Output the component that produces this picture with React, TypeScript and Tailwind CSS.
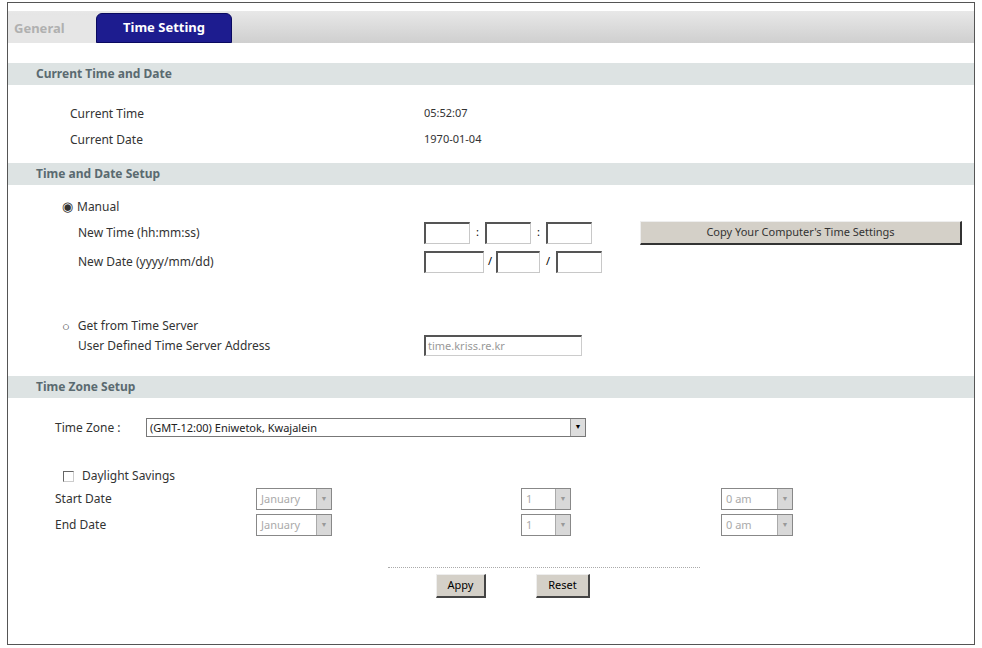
import React from "react";

const Hdr = ({ t }: { t: string }) => (
  <div className="h-[22px] bg-[#dde3e3] pl-[28px] flex items-center text-[12px] font-bold text-[#5a6a70] font-['DejaVu_Sans',sans-serif]">{t}</div>
);
const Box = ({ w }: { w: string }) => (
  <div className={`${w} h-[22px] bg-white border border-[#c8c8c8] border-t-[#555] border-l-[#555] border-t-2 border-l-2`} />
);
const Sel = ({ w, t }: { w: string; t: string }) => (
  <div className={`${w} h-[22px] flex border border-[#888] bg-white`}>
    <div className="flex-1 text-[11px] text-[#aaa] pl-1 leading-[20px] font-['Liberation_Sans',sans-serif]">{t}</div>
    <div className="w-[15px] bg-[#d8d8d8] border-l border-[#aaa] flex items-center justify-center text-[7px] text-[#999]">▼</div>
  </div>
);
const Lbl = "text-[12px] text-[#333] font-['DejaVu_Sans',sans-serif]";

export default function App() {
  return (
    <div className="w-[982px] h-[648px] bg-white p-[2px_7px_3px_7px]">
      <div className="h-full border border-[#555] flex flex-col">
        <div className="mt-[8px] h-[32px] bg-gradient-to-b from-[#e8e8e8] to-[#cfcfcf] flex items-end">
          <div className="w-[88px] h-[28px] flex items-center pl-[6px] text-[13px] font-bold text-[#b0b0b0] font-['DejaVu_Serif',serif] bg-[#e6e6e6]">General</div>
          <div className="w-[136px] h-[30px] rounded-t-[6px] bg-[#1d1c8f] border border-[#0a0a60] flex items-center justify-center text-[13px] font-bold text-white font-['DejaVu_Sans',sans-serif]">Time Setting</div>
        </div>
        <div className="h-[20px]" />
        <Hdr t="Current Time and Date" />
        <div className="flex flex-col gap-[8px] pt-[20px] pb-[14px]">
          <div className="flex"><div className={`w-[416px] pl-[62px] ${Lbl}`}>Current Time</div><div className="text-[11px] text-[#333] font-['Liberation_Sans',sans-serif]">05:52:07</div></div>
          <div className="flex"><div className={`w-[416px] pl-[62px] ${Lbl}`}>Current Date</div><div className="text-[11px] text-[#333] font-['Liberation_Sans',sans-serif]">1970-01-04</div></div>
        </div>
        <Hdr t="Time and Date Setup" />
        <div className="pt-[12px] pl-[54px] flex flex-col">
          <div className={`flex items-center gap-[4px] ${Lbl}`}><span className="text-[13px]">◉</span>Manual</div>
          <div className="flex items-center mt-[4px]">
            <div className={`w-[362px] pl-[16px] ${Lbl}`}>New Time (hh:mm:ss)</div>
            <Box w="w-[46px]" /><span className="w-[15px] text-center text-[11px]">:</span><Box w="w-[46px]" /><span className="w-[15px] text-center text-[11px]">:</span><Box w="w-[46px]" />
            <div className="ml-[48px] w-[322px] h-[24px] bg-[#d4d0c8] border border-[#eee] border-r-[#333] border-b-[#333] border-r-2 border-b-2 flex items-center justify-center text-[11px] text-[#333] font-['Liberation_Sans',sans-serif]">Copy Your Computer's Time Settings</div>
          </div>
          <div className="flex items-center mt-[6px]">
            <div className={`w-[362px] pl-[16px] ${Lbl}`}>New Date (yyyy/mm/dd)</div>
            <Box w="w-[60px]" /><span className="w-[12px] text-center text-[11px]">/</span><Box w="w-[44px]" /><span className="w-[16px] text-center text-[11px]">/</span><Box w="w-[46px]" />
          </div>
          <div className={`flex items-center gap-[8px] mt-[44px] ${Lbl}`}><span className="text-[13px]">○</span>Get from Time Server</div>
          <div className="flex items-center -mt-[1px]">
            <div className={`w-[362px] pl-[16px] ${Lbl}`}>User Defined Time Server Address</div>
            <div className="w-[158px] h-[21px] border border-[#ccc] border-l-2 border-t-2 border-l-[#555] border-t-[#555] text-[11px] text-[#999] pl-[2px] leading-[17px] font-['Liberation_Sans',sans-serif]">time.kriss.re.kr</div>
          </div>
        </div>
        <div className="h-[20px]" />
        <Hdr t="Time Zone Setup" />
        <div className="pl-[47px] pt-[20px]">
          <div className="flex items-center">
            <span className={`${Lbl} w-[91px]`}>Time Zone :</span>
            <div className="w-[440px] h-[19px] flex border border-[#777]">
              <div className="flex-1 text-[11px] text-[#222] pl-[3px] leading-[17px] font-['Liberation_Sans',sans-serif]">(GMT-12:00) Eniwetok, Kwajalein</div>
              <div className="w-[15px] bg-[#ddd] border-l border-[#999] flex items-center justify-center text-[7px]">▼</div>
            </div>
          </div>
          <div className={`flex items-center gap-[8px] mt-[30px] pl-[8px] ${Lbl}`}><span className="w-[11px] h-[11px] border border-[#666] border-r-[#ccc] border-b-[#ccc]" />Daylight Savings</div>
          <div className="flex items-center mt-[3px]">
            <div className={`w-[201px] ${Lbl}`}>Start Date</div>
            <Sel w="w-[76px]" t="January" /><div className="w-[189px]" /><Sel w="w-[50px]" t="1" /><div className="w-[150px]" /><Sel w="w-[72px]" t="0 am" />
          </div>
          <div className="flex items-center mt-[4px]">
            <div className={`w-[201px] ${Lbl}`}>End Date</div>
            <Sel w="w-[76px]" t="January" /><div className="w-[189px]" /><Sel w="w-[50px]" t="1" /><div className="w-[150px]" /><Sel w="w-[72px]" t="0 am" />
          </div>
        </div>
        <div className="ml-[380px] mt-[31px] w-[312px] border-t border-dotted border-[#aaa]" />
        <div className="flex mt-[6px] ml-[428px] gap-[50px]">
          <div className="w-[50px] h-[24px] bg-[#d4d0c8] border border-[#eee] border-r-2 border-b-2 border-r-[#444] border-b-[#444] flex items-center justify-center text-[11px] font-['Liberation_Sans',sans-serif]">Appy</div>
          <div className="w-[54px] h-[24px] bg-[#d4d0c8] border border-[#eee] border-r-2 border-b-2 border-r-[#444] border-b-[#444] flex items-center justify-center text-[11px] font-['Liberation_Sans',sans-serif]">Reset</div>
        </div>
      </div>
    </div>
  );
}
